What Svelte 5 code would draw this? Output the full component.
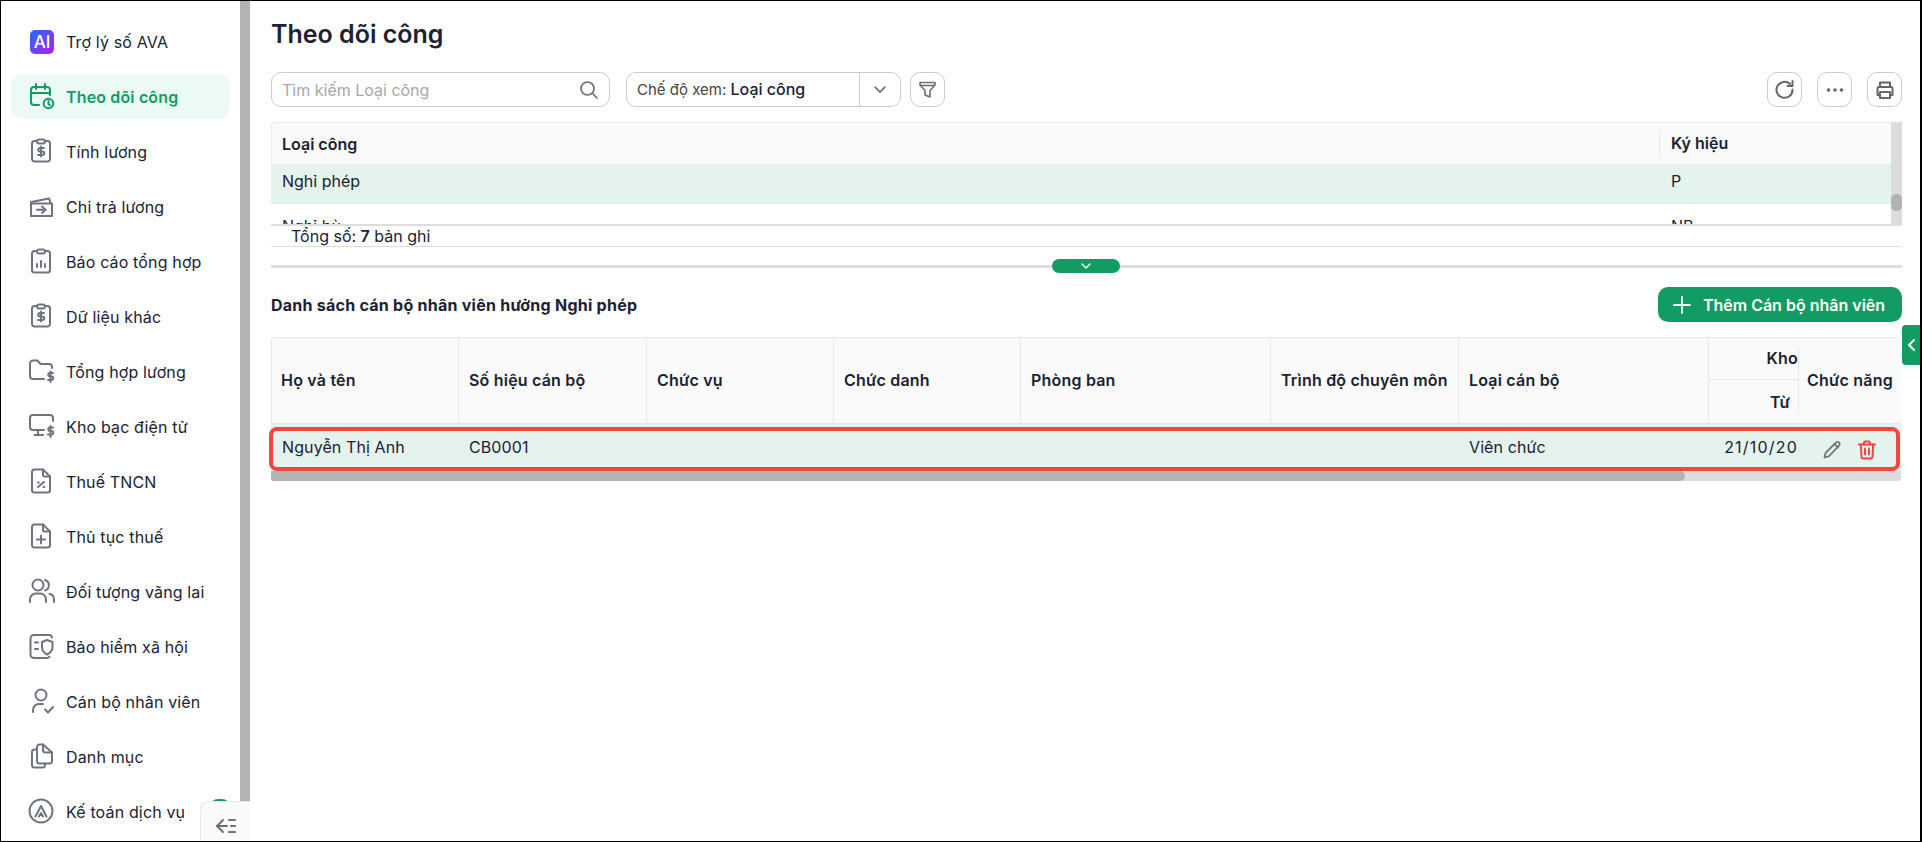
<script>
  const menu = [
    { label: 'Trợ lý số AVA', ai: true },
    {
      label: 'Theo dõi công',
      active: true,
      paths: ['M11 22H6a3 3 0 0 1-3-3V7a3 3 0 0 1 3-3h13a3 3 0 0 1 3 3v5', 'M3 10h19', 'M8 1v5', 'M17 1v5', 'M20.5 18v3l1.5 1.2'],
      circle: [20.5, 20.5, 4.8]
    },
    {
      label: 'Tính lương',
      paths: ['M9 3H6.5A2.5 2.5 0 0 0 4 5.500V21a2.500 2.500 0 0 0 2.500 2.500h13A2.500 2.500 0 0 0 22 21V5.500A2.500 2.500 0 0 0 19.500 3H17', 'M9 3.500a2 2 0 0 1 2-2h4a2 2 0 0 1 2 2 2 2 0 0 1-2 2h-4a2 2 0 0 1-2-2z', 'M16 10h-4a1.700 1.700 0 0 0 0 3.500h2.500a1.700 1.700 0 0 1 0 3.500H10', 'M13 8.500V18.500']
    },
    {
      label: 'Chi trả lương',
      paths: ['M3 10.500h21V23H3z', 'M3 10V9l18-3.500 1.500 4.500', 'M9 16.700h8.500', 'M14 13.500l3.500 3.200-3.500 3.200']
    },
    {
      label: 'Báo cáo tổng hợp',
      paths: ['M9 3H6.500A2.500 2.500 0 0 0 4 5.500V22a2.500 2.500 0 0 0 2.500 2.500h13A2.500 2.500 0 0 0 22 22V5.500A2.500 2.500 0 0 0 19.500 3H17', 'M9 3.500a2 2 0 0 1 2-2h4a2 2 0 0 1 2 2 2 2 0 0 1-2 2h-4a2 2 0 0 1-2-2z', 'M9 19v-3', 'M13 19v-6', 'M17 19v-3']
    },
    {
      label: 'Dữ liệu khác',
      paths: ['M9 3H6.500A2.500 2.500 0 0 0 4 5.500V21a2.500 2.500 0 0 0 2.500 2.500h13A2.500 2.500 0 0 0 22 21V5.500A2.500 2.500 0 0 0 19.500 3H17', 'M9 3.500a2 2 0 0 1 2-2h4a2 2 0 0 1 2 2 2 2 0 0 1-2 2h-4a2 2 0 0 1-2-2z', 'M16 10h-4a1.700 1.700 0 0 0 0 3.500h2.500a1.700 1.700 0 0 1 0 3.500H10', 'M13 8.500V18.500']
    },
    {
      label: 'Tổng hợp lương',
      paths: ['M16 21H5a3 3 0 0 1-3-3V5.500a3 3 0 0 1 3-3h4.500l3 3.500H21a3 3 0 0 1 3 2.500V10', 'M25 15h-3a1.300 1.300 0 0 0 0 3.500h1.500a1.400 1.400 0 0 1 0 3.500H20', 'M22.500 13.500V24']
    },
    {
      label: 'Kho bạc điện tử',
      paths: ['M16 17H5a3 3 0 0 1-3-3V5a3 3 0 0 1 3-3h17a3 3 0 0 1 3 3v3', 'M10 17v5', 'M6.500 22H15', 'M25 14.500h-3a1.300 1.300 0 0 0 0 3.500h1.500a1.400 1.400 0 0 1 0 3.500H20', 'M22.500 13V24']
    },
    {
      label: 'Thuế TNCN',
      paths: ['M15 1.500H6.500A2.500 2.500 0 0 0 4 4v18a2.500 2.500 0 0 0 2.500 2.500h13A2.500 2.500 0 0 0 22 22V8.500z', 'M15 1.500V7a1.500 1.500 0 0 0 1.500 1.500H22', 'M10 19l6-5', 'M10 14.500h.8', 'M15.500 19h.8']
    },
    {
      label: 'Thủ tục thuế',
      paths: ['M15 1.500H6.500A2.500 2.500 0 0 0 4 4v18a2.500 2.500 0 0 0 2.500 2.500h13A2.500 2.500 0 0 0 22 22V8.500z', 'M15 1.500V7a1.500 1.500 0 0 0 1.500 1.500H22', 'M13 12.500v8', 'M9 16.500h8']
    },
    {
      label: 'Đối tượng vãng lai',
      paths: ['M2 24v-2.500A6 6 0 0 1 8 15.500h4a6 6 0 0 1 6 6V24', 'M17 2a5.500 5.500 0 0 1 0 10.500', 'M21.500 15.800A6 6 0 0 1 26 21.500V24'],
      circle: [10, 7, 5.5]
    },
    {
      label: 'Bảo hiểm xã hội',
      paths: ['M24 4.500A3 3 0 0 0 21 2H6a3.500 3.500 0 0 0-3.500 3.500v16A3.500 3.500 0 0 0 6 25h13a3 3 0 0 0 2.500-1.500', 'M7 9.500h3', 'M7 16h3', 'M14 9l5-2 5.500 2v5c0 3.500-2.500 6-5.500 7.500-3-1.500-5-4-5-7.500z']
    },
    {
      label: 'Cán bộ nhân viên',
      paths: ['M5 24v-2a6 6 0 0 1 6-6h4', 'M17 21.500l3 3 5-5.500'],
      circle: [13, 7, 5.5]
    },
    {
      label: 'Danh mục',
      paths: ['M9 6.500H6.500A2.500 2.500 0 0 0 4 9v13a2.500 2.500 0 0 0 2.500 2.500h8A2.500 2.500 0 0 0 17 22v-1.500', 'M15 1.500h-3.500A2.500 2.500 0 0 0 9 4v14a2.500 2.500 0 0 0 2.500 2.500h10A2.500 2.500 0 0 0 24 18V9.500z', 'M15 1.500V7a2.500 2.500 0 0 0 2.500 2.500H24']
    },
    {
      label: 'Kế toán dịch vụ',
      paths: ['M7.500 18.500L13 8l5.500 10.500', 'M11 18.500l2-3.500 2 3.500'],
      circle: [13, 13, 11.5]
    }
  ];

  const columns = [
    { label: 'Họ và tên', width: 188 },
    { label: 'Số hiệu cán bộ', width: 188 },
    { label: 'Chức vụ', width: 187 },
    { label: 'Chức danh', width: 187 },
    { label: 'Phòng ban', width: 250 },
    { label: 'Trình độ chuyên môn', width: 188 },
    { label: 'Loại cán bộ', width: 250 }
  ];
</script>

<div class="page">
  <aside class="sidebar">
    <nav class="menu">
      {#each menu as item}
        <div class="menu-item" class:active={item.active}>
          {#if item.ai}
            <span class="ai-icon">AI</span>
          {:else}
            <svg class="menu-icon" width="27" height="27" viewBox="0 0 27 27" fill="none" stroke="currentColor" stroke-width="2" stroke-linecap="round" stroke-linejoin="round">
              {#each item.paths as d}
                <path {d} />
              {/each}
              {#if item.circle}
                <circle cx={item.circle[0]} cy={item.circle[1]} r={item.circle[2]} />
              {/if}
            </svg>
          {/if}
          <span>{item.label}</span>
        </div>
      {/each}
    </nav>
    <div class="sidebar-scroll"></div>
    <span class="badge"></span>
    <div class="collapse">
      <svg width="22" height="16" viewBox="0 0 22 16" fill="none" stroke="#6b7079" stroke-width="2" stroke-linecap="round" stroke-linejoin="round">
        <path d="M8 2L2 8l6 6" />
        <path d="M2 8h10" />
        <path d="M14 2h6" />
        <path d="M16 8h4" />
        <path d="M14 14h6" />
      </svg>
    </div>
  </aside>

  <main class="main">
    <h1>Theo dõi công</h1>

    <div class="toolbar">
      <div class="search">
        <span>Tìm kiếm Loại công</span>
        <svg width="20" height="20" viewBox="0 0 20 20" fill="none" stroke="#6b6f76" stroke-width="1.700" stroke-linecap="round">
          <circle cx="8.500" cy="8.500" r="6.500" />
          <path d="M13.500 13.500L18 18" />
        </svg>
      </div>
      <div class="select">
        <div class="select-value"><span class="select-label">Chế độ xem:</span> Loại công</div>
        <div class="select-arrow">
          <svg width="14" height="9" viewBox="0 0 14 9" fill="none" stroke="#5f6368" stroke-width="1.600" stroke-linecap="round" stroke-linejoin="round">
            <path d="M2 2l5 5 5-5" />
          </svg>
        </div>
      </div>
      <button class="icon-btn filter" aria-label="Lọc">
        <svg width="19" height="19" viewBox="0 0 19 19" fill="none" stroke="#6b6f76" stroke-width="1.600" stroke-linejoin="round">
          <path d="M2 2.500h15v2.500l-5 5.500v6.500l-5-2v-4.500L2 5z" />
          <path d="M2 5.500h15" />
        </svg>
      </button>
      <div class="spacer"></div>
      <button class="icon-btn" aria-label="Tải lại">
        <svg width="22" height="22" viewBox="0 0 22 22" fill="none" stroke="#666" stroke-width="2" stroke-linecap="round" stroke-linejoin="round">
          <path d="M18.500 10.500A8 8 0 1 1 16 5" />
          <path d="M18.500 2v5h-5" />
        </svg>
      </button>
      <button class="icon-btn" aria-label="Thêm">
        <svg width="20" height="6" viewBox="0 0 20 6" fill="#666">
          <circle cx="3.500" cy="3" r="1.800" />
          <circle cx="10" cy="3" r="1.800" />
          <circle cx="16.500" cy="3" r="1.800" />
        </svg>
      </button>
      <button class="icon-btn" aria-label="In">
        <svg width="20" height="20" viewBox="0 0 20 20" fill="none" stroke="#666" stroke-width="2" stroke-linejoin="round">
          <path d="M5 7V2.500h10V7" />
          <path d="M5 15H2.500V8.500A1.500 1.500 0 0 1 4 7h12a1.500 1.500 0 0 1 1.500 1.500V15H15" />
          <path d="M5 12h10v6H5z" />
        </svg>
      </button>
    </div>

    <section class="upper">
      <div class="upper-head">
        <div class="upper-col-name">Loại công</div>
        <div class="upper-col-code">Ký hiệu</div>
      </div>
      <div class="upper-body">
        <div class="upper-rows">
          <div class="upper-row selected"><div class="upper-col-name">Nghỉ phép</div><div class="upper-col-code">P</div></div>
          <div class="upper-row"><div class="upper-col-name">Nghỉ bù</div><div class="upper-col-code">NB</div></div>
        </div>
      </div>
      <div class="upper-scroll"><span></span></div>
    </section>
    <div class="total">Tổng số: <b>7</b> bản ghi</div>

    <div class="splitter">
      <button class="splitter-btn" aria-label="Thu gọn">
        <svg width="10" height="6" viewBox="0 0 10 6" fill="none" stroke="#fff" stroke-width="1.300" stroke-linecap="round" stroke-linejoin="round">
          <path d="M1 1l4 4 4-4" />
        </svg>
      </button>
    </div>

    <div class="section-head">
      <h2>Danh sách cán bộ nhân viên hưởng Nghỉ phép</h2>
      <button class="add-btn">
        <svg width="18" height="18" viewBox="0 0 18 18" fill="none" stroke="#fff" stroke-width="1.800" stroke-linecap="round">
          <path d="M9 1v16" />
          <path d="M1 9h16" />
        </svg>
        Thêm Cán bộ nhân viên
      </button>
    </div>

    <section class="staff">
      <table>
        <colgroup>
          {#each columns as col}
            <col style="width: {col.width}px" />
          {/each}
          <col style="width: 89px" />
          <col style="width: 103px" />
        </colgroup>
        <thead>
          <tr>
            {#each columns as col}
              <th rowspan="2">{col.label}</th>
            {/each}
            <th class="group"><div class="clip">Kho</div></th>
            <th rowspan="2" class="actions-head">Chức năng</th>
          </tr>
          <tr>
            <th class="sub">Từ</th>
          </tr>
        </thead>
        <tbody>
          <tr>
            <td>Nguyễn Thị Anh</td>
            <td>CB0001</td>
            <td></td>
            <td></td>
            <td></td>
            <td></td>
            <td>Viên chức</td>
            <td class="date"><div class="clip">21/10/20</div></td>
            <td class="actions">
              <svg width="20" height="20" viewBox="0 0 20 20" fill="none" stroke="#777" stroke-width="1.800" stroke-linejoin="round" stroke-linecap="round">
                <path d="M2.500 17.500l1-4.500L14 2.500a2 2 0 0 1 3 0 2.200 2.200 0 0 1 0 3.200L6.800 16.300z" />
                <path d="M12.500 4l3.500 3.500" />
              </svg>
              <svg width="20" height="20" viewBox="0 0 20 20" fill="none" stroke="#f24444" stroke-width="2" stroke-linejoin="round" stroke-linecap="round">
                <path d="M2 4.500h16" />
                <path d="M7 4.500V3a1.500 1.500 0 0 1 1.500-1.500h3A1.500 1.500 0 0 1 13 3v1.500" />
                <path d="M3.800 4.500l.7 12a2 2 0 0 0 2 2h7a2 2 0 0 0 2-2l.7-12" />
                <path d="M8 8.500v6" />
                <path d="M12 8.500v6" />
              </svg>
            </td>
          </tr>
        </tbody>
      </table>
      <div class="h-scroll"><span></span></div>
      <div class="highlight"></div>
    </section>

    <button class="side-tab" aria-label="Mở">
      <svg width="9" height="14" viewBox="0 0 9 14" fill="none" stroke="#fff" stroke-width="2" stroke-linecap="round" stroke-linejoin="round">
        <path d="M7 2L2 7l5 5" />
      </svg>
    </button>
  </main>
</div>

<style>
  :global(body) {
    margin: 0;
    background: #fff;
  }

  .page {
    box-sizing: border-box;
    width: 1922px;
    height: 842px;
    display: flex;
    border: 1px solid #000;
    border-right-width: 2px;
    overflow: hidden;
    font-family: Inter, 'Noto Sans', sans-serif;
    color: #1a2233;
    background: #fff;
  }

  .sidebar {
    position: relative;
    width: 249px;
    flex: none;
    display: flex;
    justify-content: space-between;
    overflow: hidden;
  }

  .menu {
    display: flex;
    flex-direction: column;
    gap: 10px;
    width: 219px;
    margin: 18px 0 0 10px;
  }

  .menu-item {
    display: flex;
    align-items: center;
    height: 45px;
    flex: none;
    padding-left: 17px;
    gap: 11px;
    border-radius: 12px;
    font-size: 16px;
    letter-spacing: 0.15px;
    color: #1a2233;
  }

  .menu-item.active {
    background: #ebfaf4;
    color: #129b63;
    font-weight: 600;
  }

  .menu-icon {
    flex: none;
    color: #6f7480;
  }

  .active .menu-icon {
    color: #129b63;
  }

  .ai-icon {
    width: 24px;
    height: 24px;
    margin: 0 1px 0 2px;
    flex: none;
    display: flex;
    align-items: center;
    justify-content: center;
    border-radius: 5px;
    background: linear-gradient(135deg, #1f6dff, #b31cf0);
    color: #fff;
    font-size: 17px;
    font-weight: 500;
    letter-spacing: 0;
  }

  .badge {
    position: absolute;
    left: 209px;
    top: 798px;
    width: 20px;
    height: 20px;
    border-radius: 8px;
    background: #129b63;
  }

  .collapse {
    position: absolute;
    right: 0;
    bottom: 0;
    width: 50px;
    height: 40px;
    box-sizing: border-box;
    padding: 8px 0 0 1px;
    display: flex;
    align-items: center;
    justify-content: center;
    background: #fafafa;
    border: 1px solid #e8e8e8;
    border-width: 1px 0 0 1px;
    border-top-left-radius: 8px;
  }

  .sidebar-scroll {
    width: 10px;
    flex: none;
    background: #b3b3b3;
  }

  .main {
    position: relative;
    flex: 1;
    min-width: 0;
    box-sizing: border-box;
    padding: 0 18px 0 21px;
    display: flex;
    flex-direction: column;
  }

  h1 {
    margin: 0;
    padding-top: 16px;
    height: 71px;
    box-sizing: border-box;
    font-size: 25px;
    line-height: 34px;
    font-weight: 600;
    color: #1a2233;
  }

  .toolbar {
    display: flex;
    align-items: center;
    height: 35px;
  }

  .search {
    box-sizing: border-box;
    width: 339px;
    height: 35px;
    margin-right: 16px;
    padding: 0 10px;
    display: flex;
    align-items: center;
    justify-content: space-between;
    border: 1px solid #ccc;
    border-radius: 10px;
    font-size: 16px;
    color: #a8a8a8;
  }

  .select {
    box-sizing: border-box;
    width: 275px;
    height: 35px;
    margin-right: 9px;
    display: flex;
    border: 1px solid #ccc;
    border-radius: 10px;
  }

  .select-value {
    flex: 1;
    padding-left: 10px;
    line-height: 33px;
    font-size: 16px;
    font-weight: 500;
    color: #1a2233;
  }

  .select-label {
    font-size: 15px;
    font-weight: 400;
    color: #444;
  }

  .select-arrow {
    width: 40px;
    display: flex;
    align-items: center;
    justify-content: center;
    border-left: 1px solid #ccc;
  }

  .icon-btn {
    box-sizing: border-box;
    width: 35px;
    height: 35px;
    padding: 0;
    margin-left: 15px;
    display: flex;
    align-items: center;
    justify-content: center;
    background: #fff;
    border: 1px solid #ccc;
    border-radius: 10px;
  }

  .filter {
    margin-left: 0;
  }

  .spacer {
    flex: 1;
  }

  .spacer + .icon-btn {
    margin-left: 0;
  }

  .upper {
    position: relative;
    margin-top: 15px;
    height: 104px;
    overflow: hidden;
    border-bottom: 2px solid #ddd;
    box-sizing: border-box;
    font-size: 16px;
  }

  .upper-head {
    display: flex;
    height: 43px;
    box-sizing: border-box;
    align-items: center;
    padding-right: 11px;
    background: #fafafa;
    border: 1px solid #ececec;
    border-right: 0;
    border-radius: 4px 4px 0 0;
    font-weight: 600;
  }

  .upper-col-name {
    width: 1388px;
    flex: none;
    box-sizing: border-box;
    padding-left: 11px;
  }

  .upper-col-code {
    flex: 1;
    box-sizing: border-box;
    padding-left: 12px;
  }

  .upper-head .upper-col-name {
    width: 1387px;
    padding-left: 10px;
  }

  .upper-head .upper-col-code {
    border-left: 1px solid #e8e8e8;
    padding-left: 11px;
    line-height: 27px;
  }

  .upper-body {
    height: 59px;
    overflow: hidden;
    margin-right: 11px;
  }

  .upper-rows {
    margin-top: -6px;
  }

  .upper-row {
    display: flex;
    align-items: center;
    height: 45px;
    box-sizing: border-box;
    border-bottom: 1px solid #e8e8e8;
  }

  .upper-row.selected {
    background: #e5f3ee;
  }

  .upper-scroll {
    position: absolute;
    top: 0;
    right: 0;
    bottom: 0;
    width: 11px;
    background: #dcdcdc;
  }

  .upper-scroll span {
    position: absolute;
    top: 72px;
    left: 0;
    width: 11px;
    height: 17px;
    border-radius: 5px;
    background: #b3b3b3;
  }

  .total {
    height: 20px;
    padding-left: 20px;
    border-bottom: 1px solid #ddd;
    font-size: 16px;
    line-height: 20px;
    box-sizing: content-box;
  }

  .total b {
    font-weight: 600;
  }

  .splitter {
    position: relative;
    margin-top: 18px;
    height: 3px;
    background: #dedede;
  }

  .splitter-btn {
    position: absolute;
    top: -6px;
    left: 781px;
    width: 68px;
    height: 14px;
    padding: 0;
    display: flex;
    align-items: center;
    justify-content: center;
    border: 0;
    border-radius: 7px;
    background: #129b63;
  }

  .section-head {
    display: flex;
    align-items: center;
    justify-content: space-between;
    margin-top: 19px;
    height: 35px;
  }

  h2 {
    margin: 0;
    font-size: 16px;
    font-weight: 700;
    letter-spacing: 0.25px;
    color: #1a2233;
  }

  .add-btn {
    box-sizing: border-box;
    width: 244px;
    height: 35px;
    display: flex;
    align-items: center;
    justify-content: center;
    gap: 12px;
    padding: 0 2px 0 0;
    border: 0;
    border-radius: 10px;
    background: #129b63;
    color: #fff;
    font-family: inherit;
    font-size: 16px;
    font-weight: 600;
  }

  .staff {
    position: relative;
    margin-top: 15px;
    width: 1630px;
  }

  table {
    table-layout: fixed;
    width: 1630px;
    border-collapse: separate;
    border-spacing: 0;
    font-size: 16px;
  }

  th {
    height: 43px;
    padding: 0 10px;
    box-sizing: border-box;
    text-align: left;
    font-weight: 600;
    letter-spacing: 0.2px;
    background: #fafafa;
    border-right: 1px solid #e8e8e8;
    border-bottom: 1px solid #e8e8e8;
    white-space: nowrap;
  }

  thead tr:first-child th {
    border-top: 1px solid #e8e8e8;
    padding-bottom: 1px;
  }

  thead tr:first-child th:first-child {
    border-left: 1px solid #e8e8e8;
    border-top-left-radius: 4px;
    padding-left: 9px;
  }

  th.group,
  th.sub {
    padding: 0;
    text-align: right;
    border-right: 0;
  }

  th.sub {
    height: 44px;
    padding-right: 8px;
  }

  .clip {
    overflow: hidden;
    white-space: nowrap;
  }

  th.actions-head {
    position: relative;
    padding: 0 0 0 9px;
    border-right: 0;
    border-top-right-radius: 4px;
  }

  th.actions-head::before {
    content: '';
    position: absolute;
    left: 0;
    top: 10px;
    bottom: 10px;
    width: 1px;
    background: #e8e8e8;
  }

  td {
    height: 47px;
    padding: 0 10px 2px;
    box-sizing: border-box;
    background: #e5f3ee;
    letter-spacing: 0.1px;
    white-space: nowrap;
  }

  td:first-child {
    padding-left: 11px;
  }

  td.date {
    padding: 0 0 2px;
    text-align: right;
    letter-spacing: 1.2px;
  }

  td.actions {
    padding: 4px 0 0 24px;
  }

  td.actions svg {
    margin-right: 10px;
    vertical-align: middle;
  }

  .h-scroll {
    height: 10px;
    background: #dcdcdc;
    border-radius: 0 0 3px 3px;
  }

  .h-scroll span {
    display: block;
    width: 1414px;
    height: 10px;
    background: #b3b3b3;
    border-radius: 0 5px 5px 3px;
  }

  .highlight {
    position: absolute;
    left: -2px;
    top: 90px;
    right: 1px;
    height: 44px;
    box-sizing: border-box;
    border: 4px solid #f44444;
    border-radius: 8px;
    pointer-events: none;
  }

  .side-tab {
    position: absolute;
    top: 324px;
    right: 0;
    width: 18px;
    height: 40px;
    padding: 0 0 0 1px;
    display: flex;
    align-items: center;
    justify-content: center;
    border: 0;
    border-radius: 4px 0 0 4px;
    background: #129b63;
  }
</style>
